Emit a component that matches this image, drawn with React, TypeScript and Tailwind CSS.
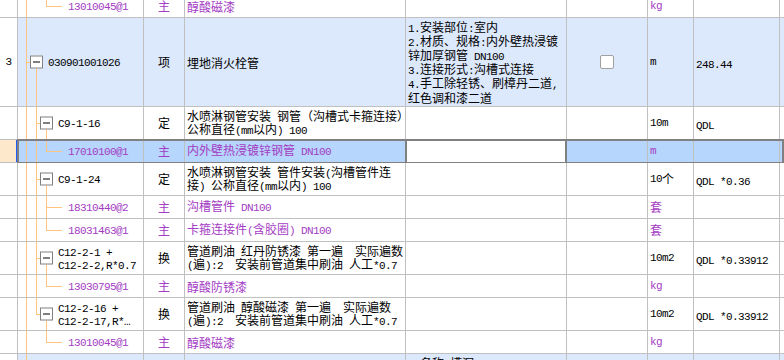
import React from 'react';

const CJK_SPLIT = /([\u2E80-\u9FFF\u3000-\u303F\uFF00-\uFFEF]+)/;
const CJK_TEST = /^[\u2E80-\u9FFF\u3000-\u303F\uFF00-\uFFEF]+$/;

// SimSun-like mix: 12px CJK, 6px-wide half-width latin
const T: React.FC<{ s: string }> = ({ s }) => (
  <>
    {s
      .split(CJK_SPLIT)
      .filter(Boolean)
      .map((p, i) =>
        CJK_TEST.test(p) ? (
          <span key={i} className="font-['Noto_Sans_CJK_SC',sans-serif] text-[12px]">
            {p}
          </span>
        ) : (
          <span key={i} className="font-['Liberation_Mono',monospace] text-[11px] tracking-[-0.6px]">
            {p}
          </span>
        )
      )}
  </>
);

type Tree = {
  b?: 'full' | 'top' | 'bottom';
  c?: 'full' | 'top' | 'bottom';
  box?: 'root' | 'child';
  leaf?: boolean;
};

type Row = {
  h: string;
  bg?: string;
  no?: string;
  code: string[];
  tree: Tree;
  kind?: string;
  name?: string[];
  desc?: string[];
  check?: boolean;
  unit?: string;
  qty?: string;
  sub?: boolean;
  selected?: boolean;
};

const rows: Row[] = [
  { h: 'h-[23px]', code: ['13010045@1'], tree: { c: 'top', leaf: true }, kind: '主', name: ['醇酸磁漆'], unit: 'kg', sub: true },
  {
    h: 'h-[89px]',
    bg: 'bg-[#dce8fc]',
    no: '3',
    code: ['030901001026'],
    tree: { b: 'bottom', box: 'root' },
    kind: '项',
    name: ['埋地消火栓管'],
    desc: [
      '1.安装部位:室内',
      '2.材质、规格:内外壁热浸镀',
      '锌加厚钢管 DN100',
      '3.连接形式:沟槽式连接',
      '4.手工除轻锈、刷樟丹二道,',
      '红色调和漆二道',
    ],
    check: true,
    unit: 'm',
    qty: '248.44',
  },
  {
    h: 'h-[33px]',
    code: ['C9-1-16'],
    tree: { b: 'full', c: 'bottom', box: 'child' },
    kind: '定',
    name: ['水喷淋钢管安装 钢管（沟槽式卡箍连接）', '公称直径(mm以内) 100'],
    unit: '10m',
    qty: 'QDL',
  },
  { h: 'h-[23px]', selected: true, code: ['17010100@1'], tree: { b: 'full', c: 'top', leaf: true }, kind: '主', name: ['内外壁热浸镀锌钢管 DN100'], unit: 'm', sub: true },
  {
    h: 'h-[33px]',
    code: ['C9-1-24'],
    tree: { b: 'full', c: 'bottom', box: 'child' },
    kind: '定',
    name: ['水喷淋钢管安装 管件安装(沟槽管件连', '接) 公称直径(mm以内) 100'],
    unit: '10个',
    qty: 'QDL *0.36',
  },
  { h: 'h-[23px]', code: ['18310440@2'], tree: { b: 'full', c: 'full', leaf: true }, kind: '主', name: ['沟槽管件 DN100'], unit: '套', sub: true },
  { h: 'h-[23px]', code: ['18031463@1'], tree: { b: 'full', c: 'top', leaf: true }, kind: '主', name: ['卡箍连接件(含胶圈) DN100'], unit: '套', sub: true },
  {
    h: 'h-[33px]',
    code: ['C12-2-1 +', 'C12-2-2,R*0.7'],
    tree: { b: 'full', c: 'bottom', box: 'child' },
    kind: '换',
    name: ['管道刷油 红丹防锈漆 第一遍  实际遍数', '(遍):2  安装前管道集中刷油 人工*0.7'],
    unit: '10m2',
    qty: 'QDL *0.33912',
  },
  { h: 'h-[23px]', code: ['13030795@1'], tree: { b: 'full', c: 'top', leaf: true }, kind: '主', name: ['醇酸防锈漆'], unit: 'kg', sub: true },
  {
    h: 'h-[33px]',
    code: ['C12-2-16 +', 'C12-2-17,R*…'],
    tree: { b: 'top', c: 'bottom', box: 'child' },
    kind: '换',
    name: ['管道刷油 醇酸磁漆 第一遍  实际遍数', '(遍):2  安装前管道集中刷油 人工*0.7'],
    unit: '10m2',
    qty: 'QDL *0.33912',
  },
  { h: 'h-[23px]', code: ['13010045@1'], tree: { c: 'top', leaf: true }, kind: '主', name: ['醇酸磁漆'], unit: 'kg', sub: true },
  { h: 'h-[89px]', bg: 'bg-[#dce8fc]', code: [], tree: {}, desc: ['1.名称:槽洞', '2.规格:'] },
];

const cell = 'shrink-0 border-r border-b border-[#c0c0c0]';
const orange = 'bg-[#ffc47e]';

const vLine = (pos: 'full' | 'top' | 'bottom' | undefined, left: string) => {
  if (!pos) return null;
  const v = pos === 'full' ? 'top-0 bottom-0' : pos === 'top' ? 'top-0 h-1/2' : 'top-1/2 bottom-0';
  return <div className={`absolute ${left} ${v} w-px ${orange}`} />;
};

const Box: React.FC<{ left: string }> = ({ left }) => (
  <div className={`absolute ${left} top-1/2 -translate-y-1/2 w-[13px] h-[13px] border border-[#808080] bg-white flex items-center justify-center`}>
    <div className="w-[7px] h-px bg-black" />
  </div>
);

const Lines: React.FC<{ lines: string[]; lh?: string }> = ({ lines, lh = 'h-[13px] leading-[13px]' }) => (
  <div className="whitespace-pre">
    {lines.map((l, i) => (
      <div key={i} className={`${lh} flex items-center`}>
        <span>
          <T s={l} />
        </span>
      </div>
    ))}
  </div>
);

const GridRow: React.FC<{ r: Row }> = ({ r }) => {
  const color = r.sub ? 'text-[#a43cc4]' : 'text-black';
  const bg = r.selected ? 'bg-[#b6d6fd]' : r.bg ?? 'bg-white';
  const t = r.tree;
  const indent = t.box === 'root' ? 'pl-[30px]' : t.box === 'child' ? 'pl-[40px]' : 'pl-[50px]';

  return (
    <div className={`relative flex ${r.h} ${color}`}>
      <div className={`${cell} w-[18px] relative flex items-center justify-center ${r.selected ? 'bg-[#fee8cc]' : 'bg-white'} text-black`}>
        {r.no && <T s={r.no} />}
        {r.selected && <div className="absolute right-[-1px] top-0 bottom-0 w-[2px] bg-[#1e5cff]" />}
      </div>

      <div className={`${cell} w-[126px] relative flex items-center ${indent} ${bg}`}>
        <div className={`absolute left-[8px] top-0 bottom-0 w-px ${orange}`} />
        {vLine(t.b, 'left-[18px]')}
        {vLine(t.c, 'left-[28px]')}
        {t.box === 'root' && (
          <>
            <div className={`absolute left-[8px] top-1/2 w-[4px] h-px ${orange}`} />
            <Box left="left-[12px]" />
          </>
        )}
        {t.box === 'child' && (
          <>
            <div className={`absolute left-[18px] top-1/2 w-[4px] h-px ${orange}`} />
            <Box left="left-[22px]" />
          </>
        )}
        {t.leaf && <div className={`absolute left-[28px] top-1/2 w-[16px] h-px ${orange}`} />}
        {r.code.length > 0 && <Lines lines={r.code} />}
      </div>

      <div className={`${cell} w-[41px] flex items-center justify-center ${bg}`}>
        {r.kind && <T s={r.kind} />}
      </div>

      <div className={`${cell} w-[221px] flex items-center pl-[2px] ${bg}`}>
        {r.name && <Lines lines={r.name} />}
      </div>

      <div className={`${cell} w-[161px] flex items-start pl-[2px] pt-[2px] text-black ${r.selected ? 'bg-white' : bg}`}>
        {r.desc && <Lines lines={r.desc} lh="h-[14px] leading-[14px]" />}
      </div>

      <div className={`${cell} w-[81px] flex items-center justify-center ${bg}`}>
        {r.check && <div className="w-[14px] h-[14px] rounded-[2px] border border-[#a0a0a0] bg-white" />}
      </div>

      <div className={`${cell} w-[46px] flex items-center pl-[2px] ${bg}`}>
        {r.unit && <T s={r.unit} />}
      </div>

      <div className={`${cell} w-[86px] flex items-center pl-[2px] text-black ${bg}`}>
        {r.qty && (
          <span className="whitespace-pre">
            <T s={r.qty} />
          </span>
        )}
      </div>

      <div className={`flex-1 border-b border-[#c0c0c0] ${bg}`} />

      {r.selected && (
        <>
          <div className="pointer-events-none absolute left-[17px] right-0 top-[-1px] h-[25px] border-2 border-[#808080]" />
          <div className="pointer-events-none absolute left-[405px] w-[162px] top-[-1px] h-[25px] border-2 border-[#808080]" />
        </>
      )}
    </div>
  );
};

export default function App() {
  return (
    <div className="w-[784px] h-[360px] overflow-hidden bg-white text-black">
      <div className="mt-[-5px]">
        {rows.map((r, i) => (
          <GridRow key={i} r={r} />
        ))}
      </div>
    </div>
  );
}
